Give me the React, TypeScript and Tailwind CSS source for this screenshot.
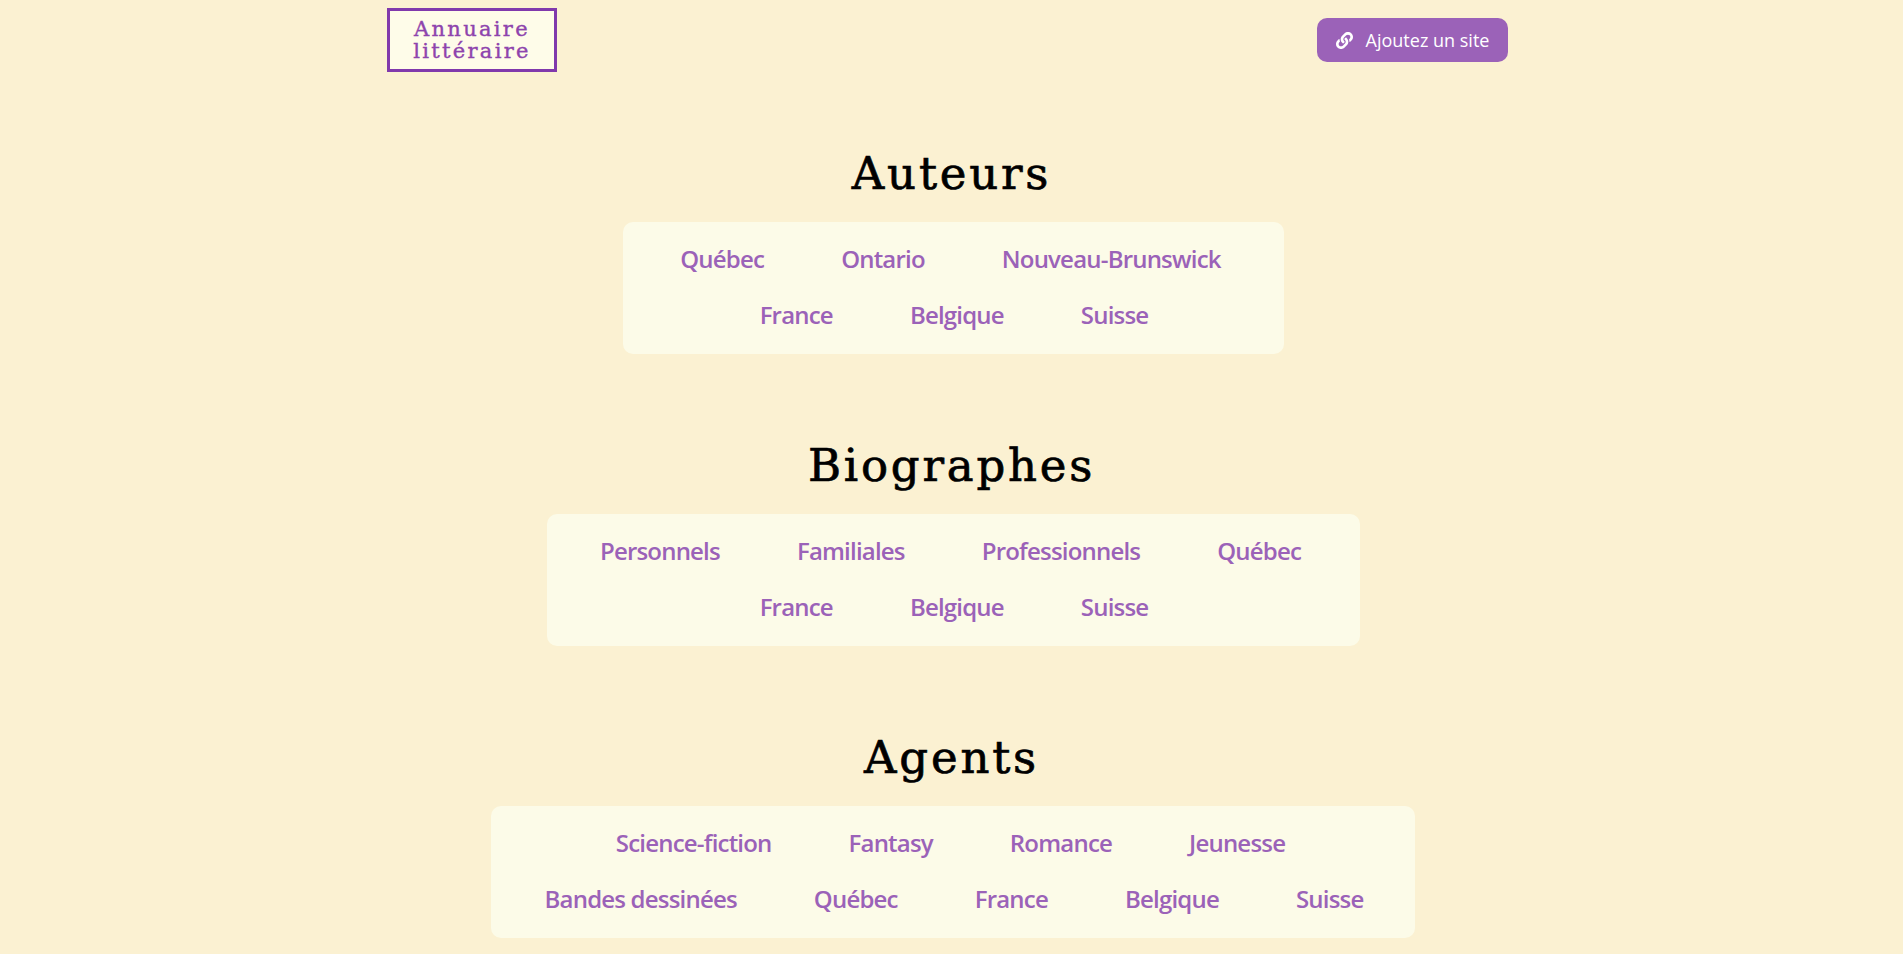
import React from 'react';
import { FaLink } from 'react-icons/fa';

const SECTIONS = [
  {
    title: 'Auteurs',
    width: 'w-[661px]',
    rows: [
      ['Québec', 'Ontario', 'Nouveau-Brunswick'],
      ['France', 'Belgique', 'Suisse'],
    ],
  },
  {
    title: 'Biographes',
    width: 'w-[813px]',
    rows: [
      ['Personnels', 'Familiales', 'Professionnels', 'Québec'],
      ['France', 'Belgique', 'Suisse'],
    ],
  },
  {
    title: 'Agents',
    width: 'w-[924px]',
    rows: [
      ['Science-fiction', 'Fantasy', 'Romance', 'Jeunesse'],
      ['Bandes dessinées', 'Québec', 'France', 'Belgique', 'Suisse'],
    ],
  },
];

function App() {
  return (
    <div className="h-[954px] overflow-hidden bg-[#fbf1d2] font-['Open_Sans',sans-serif]">
      <header className="ml-[387px] flex w-[1121px] items-start justify-between pt-2">
        <a className="flex h-16 w-[170px] flex-col items-center justify-center border-[3px] border-[#8039ac] bg-[#fefce9] font-['DejaVu_Serif',serif] text-[21px] leading-[22px] tracking-[2.3px] text-[#8e44ad] [-webkit-text-stroke:0.4px_#8e44ad]">
          <span>Annuaire</span>
          <span>littéraire</span>
        </a>
        <button className="mt-2.5 flex h-11 w-[191px] items-center justify-center gap-[13px] rounded-[10px] bg-[#9b62b8] text-[18px] font-medium text-white">
          <FaLink className="h-[17px] w-[17px]" />
          Ajoutez un site
        </button>
      </header>

      <main className="mt-[60px] flex flex-col items-center">
        {SECTIONS.map(section => (
          <section key={section.title} className="mb-[70px] flex flex-col items-center">
            <h2 className="h-[90px] font-['DejaVu_Serif',serif] text-[45px] leading-[83px] tracking-[2.8px] text-black [-webkit-text-stroke:0.7px_black]">
              {section.title}
            </h2>
            <div className={`${section.width} ml-[3px] rounded-[10px] bg-[#fcfbe8] py-2.5`}>
              {section.rows.map((row, i) => (
                <div
                  key={row.join()}
                  className={`flex h-14 items-center justify-center gap-[77px] pb-[2px] ${i === 0 ? 'pr-[5px]' : 'pl-[2px]'}`}
                >
                  {row.map(label => (
                    <a key={label} className="text-[24px] font-semibold tracking-[-0.8px] text-[#9b62b8]">
                      {label}
                    </a>
                  ))}
                </div>
              ))}
            </div>
          </section>
        ))}
      </main>
    </div>
  );
}

export default App;
